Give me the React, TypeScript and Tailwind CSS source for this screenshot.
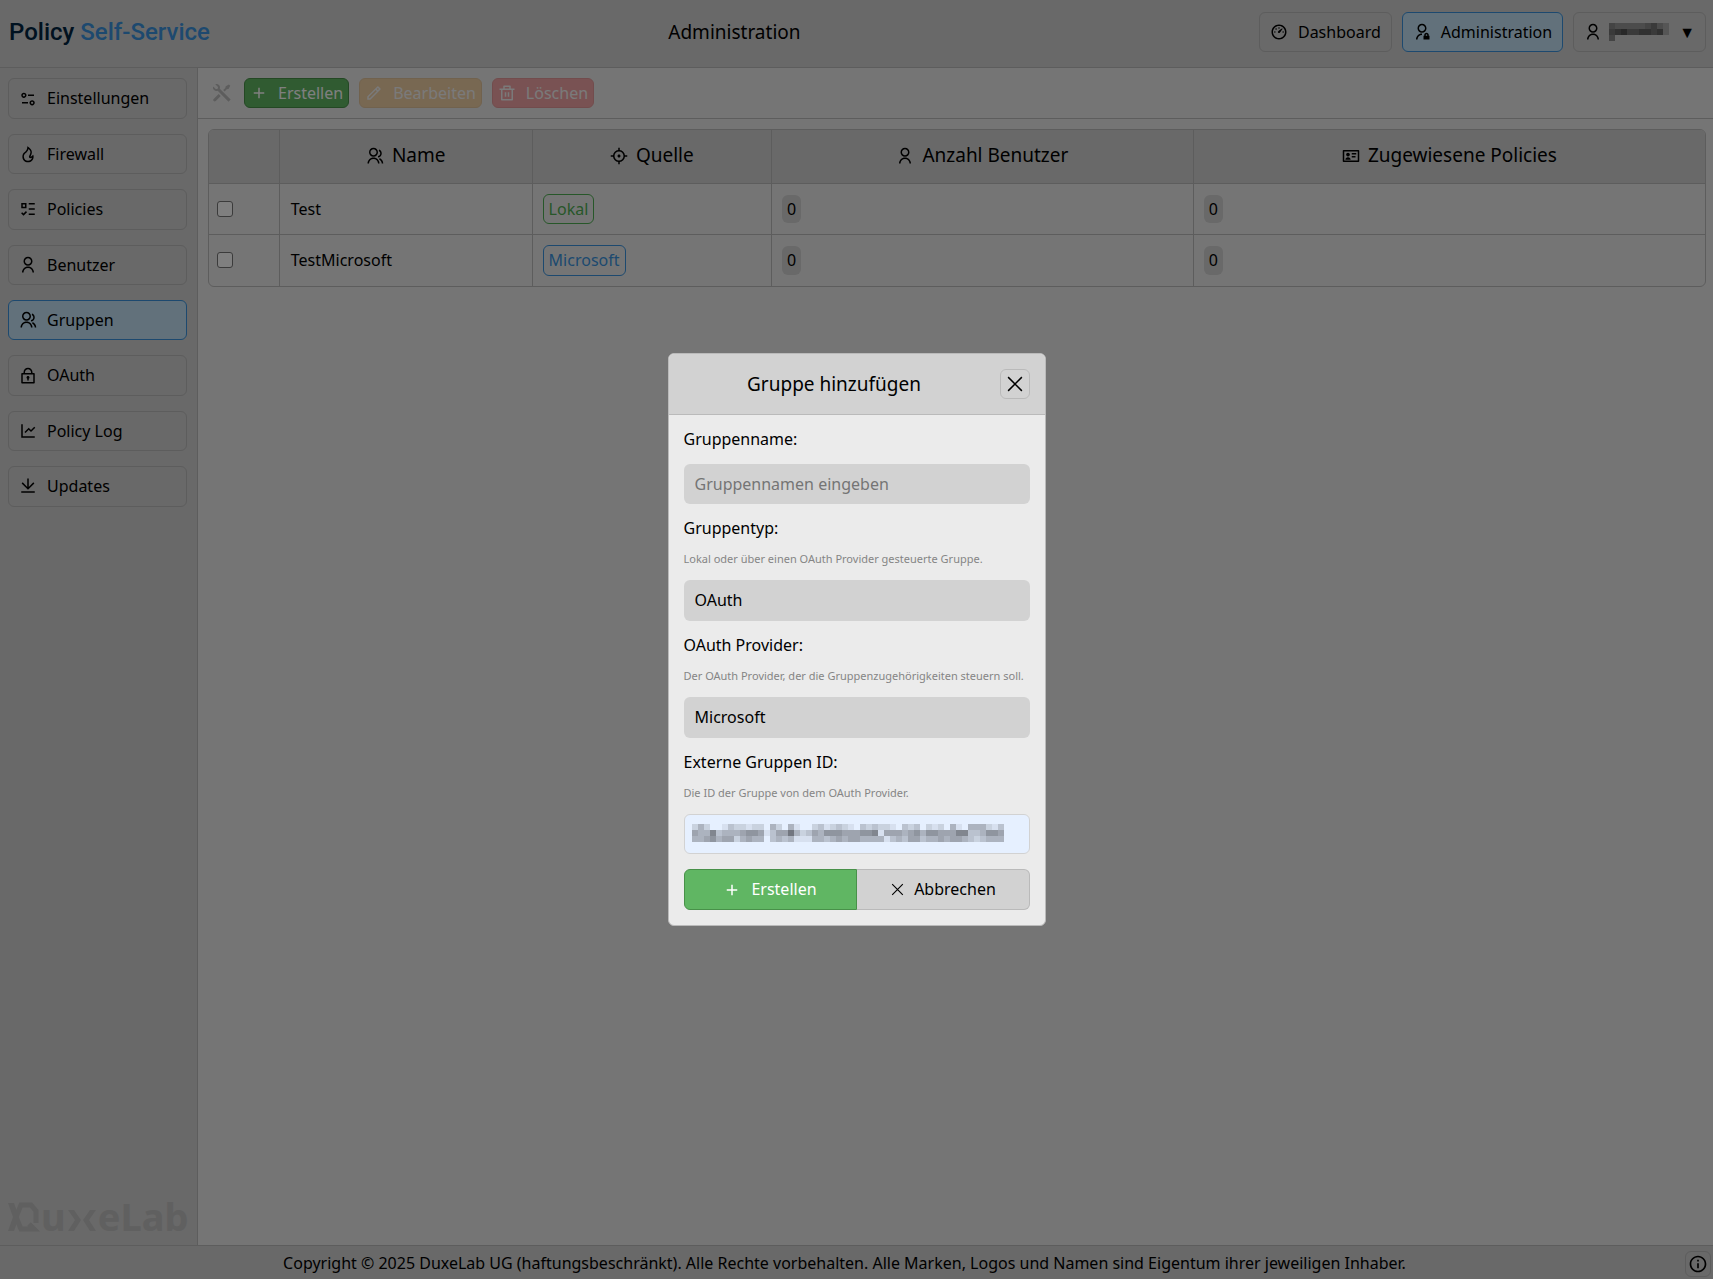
import type { ReactNode } from "react";
import type { IconType } from "react-icons";
import {
  RiAddLine,
  RiAdminLine,
  RiDashboard3Line,
  RiDeleteBinLine,
  RiDownloadLine,
  RiEqualizer2Line,
  RiFireLine,
  RiFocus3Line,
  RiGroupLine,
  RiIdCardLine,
  RiInformationLine,
  RiLineChartLine,
  RiListCheck3,
  RiLock2Line,
  RiPencilLine,
  RiToolsFill,
  RiUserLine,
} from "react-icons/ri";

const navItems = [
  { label: "Einstellungen", icon: RiEqualizer2Line },
  { label: "Firewall", icon: RiFireLine },
  { label: "Policies", icon: RiListCheck3 },
  { label: "Benutzer", icon: RiUserLine },
  { label: "Gruppen", icon: RiGroupLine, active: true },
  { label: "OAuth", icon: RiLock2Line },
  { label: "Policy Log", icon: RiLineChartLine },
  { label: "Updates", icon: RiDownloadLine },
];

const columns = [
  { label: "Name", icon: RiGroupLine },
  { label: "Quelle", icon: RiFocus3Line },
  { label: "Anzahl Benutzer", icon: RiUserLine },
  { label: "Zugewiesene Policies", icon: RiIdCardLine },
];

const groups = [
  {
    name: "Test",
    source: "Lokal",
    sourceClass: "border-[#4fae52] text-[#4fae52]",
    users: 0,
    policies: 0,
  },
  {
    name: "TestMicrosoft",
    source: "Microsoft",
    sourceClass: "border-[#3a93de] text-[#3a93de]",
    users: 0,
    policies: 0,
  },
];

// One digit per block, 0 = clear, 9 = darkest
const maskedUser = ["4333334532", "5675566562", "4000000000"];
const maskedId = [
  "2420013221220420410023123210323221032302120410444213",
  "5447344456651355842354666555667155545646655577334665",
  "4456455245440343411144345455444413435534454554323444",
];

function Mask({ rows, className }: { rows: string[]; className?: string }) {
  const width = rows[0].length * 6;
  const height = rows.length * 6;
  return (
    <svg
      width={width}
      height={height}
      viewBox={`0 0 ${width} ${height}`}
      className={className}
      shapeRendering="crispEdges"
      aria-hidden="true"
    >
      {rows.map((row, y) =>
        row
          .split("")
          .map((level, x) => (
            <rect
              key={`${x}-${y}`}
              x={x * 6}
              y={y * 6}
              width="6"
              height="6"
              fill="currentColor"
              opacity={Number(level) / 10}
            />
          ))
      )}
    </svg>
  );
}

function CrossIcon({ size }: { size: number }) {
  return (
    <svg
      width={size}
      height={size}
      viewBox="0 0 24 24"
      fill="none"
      stroke="currentColor"
      strokeWidth="1.6"
      className="shrink-0"
      aria-hidden="true"
    >
      <path d="M4.5 4.5l15 15M19.5 4.5l-15 15" />
    </svg>
  );
}

function NavLink({
  label,
  icon: Icon,
  active,
}: {
  label: string;
  icon: IconType;
  active?: boolean;
}) {
  return (
    <a
      href="#"
      className={`flex items-center gap-2.5 rounded-md border px-2.5 py-2 ${
        active ? "border-[#3a93de] bg-[#c4e3f6]" : "border-[#bababa]"
      }`}
    >
      <Icon size={18} />
      {label}
    </a>
  );
}

function DuxeLabLogo() {
  return (
    <div
      className="flex h-10 items-end text-[38px] leading-[38px] font-bold text-[#c0c0c0]"
      aria-label="DuxeLab"
    >
      <svg width="33" height="40" viewBox="0 0 33 40" className="shrink-0">
        <path d="M0 8h6l5 14-5 14H0l5-14z" fill="currentColor" />
        <path
          d="M28 28V16l-5-6H13L8 22l5 12h13l-5-5"
          fill="none"
          stroke="currentColor"
          strokeWidth="5"
        />
      </svg>
      u
      <svg width="32" height="40" viewBox="0 0 32 40" className="shrink-0">
        <path
          d="M2 15h6l7 10-7 11H2l7-11zM30 15h-6l-7 10 7 11h6l-7-11z"
          fill="currentColor"
        />
      </svg>
      eLab
    </div>
  );
}

function Field({
  id,
  label,
  hint,
  children,
}: {
  id: string;
  label: string;
  hint?: string;
  children: ReactNode;
}) {
  return (
    <div className="flex flex-col gap-[15px]">
      <label htmlFor={id} className="leading-[19px]">
        {label}
      </label>
      {hint && <p className="text-[11px] leading-3 text-[#858585]">{hint}</p>}
      {children}
    </div>
  );
}

function GroupDialog() {
  return (
    <div className="fixed inset-0 grid place-items-center bg-black/50">
      <div
        role="dialog"
        aria-modal="true"
        aria-labelledby="dialog-title"
        className="w-[378px] overflow-hidden rounded-md border border-[#bababa] bg-[#ebebeb]"
      >
        <div className="flex items-center gap-[15px] border-b border-[#bababa] bg-[#d2d2d2] p-[15px]">
          <h2 id="dialog-title" className="flex-1 text-center text-[19px]">
            Gruppe hinzufügen
          </h2>
          <button
            type="button"
            aria-label="Schließen"
            className="flex size-[30px] items-center justify-center rounded-md border border-[#bababa]"
          >
            <CrossIcon size={22} />
          </button>
        </div>

        <form className="flex flex-col gap-[15px] p-[15px]">
          <Field id="group-name" label="Gruppenname:">
            <input
              id="group-name"
              type="text"
              placeholder="Gruppennamen eingeben"
              className="h-10 w-full rounded-md bg-[#d2d2d2] px-[11px] placeholder:text-[#757575]"
            />
          </Field>
          <Field
            id="group-type"
            label="Gruppentyp:"
            hint="Lokal oder über einen OAuth Provider gesteuerte Gruppe."
          >
            <select
              id="group-type"
              className="h-[41px] w-full appearance-none rounded-md bg-[#d2d2d2] px-[11px]"
            >
              <option>OAuth</option>
              <option>Lokal</option>
            </select>
          </Field>
          <Field
            id="group-provider"
            label="OAuth Provider:"
            hint="Der OAuth Provider, der die Gruppenzugehörigkeiten steuern soll."
          >
            <select
              id="group-provider"
              className="h-[41px] w-full appearance-none rounded-md bg-[#d2d2d2] px-[11px]"
            >
              <option>Microsoft</option>
            </select>
          </Field>
          <Field
            id="group-external"
            label="Externe Gruppen ID:"
            hint="Die ID der Gruppe von dem OAuth Provider."
          >
            <div className="relative">
              <input
                id="group-external"
                type="text"
                className="block h-10 w-full rounded-md border border-[#d2d2d2] bg-[#e6f0ff] px-2.5"
              />
              <Mask
                rows={maskedId}
                className="pointer-events-none absolute top-2.5 left-2 text-[#55585f]"
              />
            </div>
          </Field>
          <div className="grid grid-cols-2">
            <button
              type="button"
              className="flex h-[41px] items-center justify-center gap-2.5 rounded-l-md border border-[#489149] bg-[#60b663] text-white"
            >
              <RiAddLine size={18} />
              Erstellen
            </button>
            <button
              type="button"
              className="flex h-[41px] items-center justify-center gap-2 rounded-r-md border border-l-0 border-[#bababa] bg-[#d2d2d2]"
            >
              <CrossIcon size={17} />
              Abbrechen
            </button>
          </div>
        </form>
      </div>
    </div>
  );
}

export default function App() {
  return (
    <div className="flex min-h-screen flex-col bg-[#ebebeb] font-['Noto_Sans',sans-serif] text-base leading-[1.4] text-black">
      <header className="flex items-start border-b border-[#bababa] bg-[#d2d2d2] px-[7px] pt-3 pb-[15px]">
        <a
          href="#"
          className="pl-0.5 font-[Roboto] text-2xl leading-10 font-medium text-[#3a93de]"
        >
          <span className="text-[#002440]">Policy</span> Self-Service
        </a>
        <h1 className="flex-1 text-center text-[19px] leading-10">Administration</h1>
        <nav className="flex gap-2.5">
          <NavLink label="Dashboard" icon={RiDashboard3Line} />
          <NavLink label="Administration" icon={RiAdminLine} active />
          <button
            type="button"
            aria-label="Benutzermenü"
            className="flex items-center rounded-md border border-[#bababa] px-2.5 py-2"
          >
            <RiUserLine size={18} />
            <Mask rows={maskedUser} className="mr-2.5 ml-[7px] text-[#181818]" />
            <span>▼</span>
          </button>
        </nav>
      </header>

      <div className="flex flex-1">
        <aside className="flex w-[198px] shrink-0 flex-col justify-between border-r border-[#bababa] bg-[#d2d2d2] px-2 py-2.5">
          <nav className="flex flex-col gap-[15px] pr-0.5">
            {navItems.map((item) => (
              <NavLink key={item.label} {...item} />
            ))}
          </nav>
          <DuxeLabLogo />
        </aside>

        <main className="flex-1">
          <div className="flex items-center gap-2.5 border-b border-[#bababa] px-3 py-2.5">
            <RiToolsFill size={24} className="text-[#bababa]" />
            <button
              type="button"
              className="flex h-[30px] items-center gap-2.5 rounded-md border border-[#489149] bg-[#60b663] px-[5px] text-white"
            >
              <RiAddLine size={18} />
              Erstellen
            </button>
            <button
              type="button"
              disabled
              className="flex h-[30px] items-center gap-2.5 rounded-md border border-[#dca050] bg-[#f7b660] px-[5px] text-white opacity-50"
            >
              <RiPencilLine size={18} />
              Bearbeiten
            </button>
            <button
              type="button"
              disabled
              className="flex h-[30px] items-center gap-2.5 rounded-md border border-[#e04a4c] bg-[#f96264] px-[5px] text-white opacity-50"
            >
              <RiDeleteBinLine size={18} />
              Löschen
            </button>
          </div>

          <div className="p-2.5 pr-[7px]">
            <div className="overflow-hidden rounded-md border border-[#bababa]">
              <table className="w-full table-fixed border-collapse">
                <colgroup>
                  <col className="w-[4.7%]" />
                  <col className="w-[16.9%]" />
                  <col className="w-[16%]" />
                  <col className="w-[28.2%]" />
                  <col />
                </colgroup>
                <thead>
                  <tr className="h-[53px] border-b border-[#bababa] bg-[#d2d2d2]">
                    <th aria-label="Auswahl" className="border-r border-[#bababa]" />
                    {columns.map(({ label, icon: Icon }) => (
                      <th
                        key={label}
                        className="border-r border-[#bababa] pb-0.5 text-[19px] font-normal last:border-r-0"
                      >
                        <span className="flex items-center justify-center gap-2">
                          <Icon size={18} />
                          {label}
                        </span>
                      </th>
                    ))}
                  </tr>
                </thead>
                <tbody>
                  {groups.map((group) => (
                    <tr
                      key={group.name}
                      className="border-b border-[#bababa] last:border-b-0"
                    >
                      <td className="border-r border-[#bababa] px-2">
                        <input
                          type="checkbox"
                          aria-label={`${group.name} auswählen`}
                          className="block size-4 appearance-none rounded-[3px] border border-[#767676] bg-white"
                        />
                      </td>
                      <td className="border-r border-[#bababa] px-[11px] py-2.5">{group.name}</td>
                      <td className="border-r border-[#bababa] p-2.5">
                        <span
                          className={`inline-block rounded-md border px-[5px] py-[3px] align-top ${group.sourceClass}`}
                        >
                          {group.source}
                        </span>
                      </td>
                      <td className="border-r border-[#bababa] p-2.5">
                        <span className="inline-block rounded-md bg-[#d2d2d2] px-[5px] py-[3px]">
                          {group.users}
                        </span>
                      </td>
                      <td className="p-2.5">
                        <span className="inline-block rounded-md bg-[#d2d2d2] px-[5px] py-[3px]">
                          {group.policies}
                        </span>
                      </td>
                    </tr>
                  ))}
                </tbody>
              </table>
            </div>
          </div>
        </main>
      </div>

      <footer className="flex h-[34px] items-center border-t border-[#bababa] bg-[#d2d2d2] pt-0.5 pr-0.5 pl-1">
        <p className="flex-1 text-center">
          Copyright © 2025 DuxeLab UG (haftungsbeschränkt). Alle Rechte vorbehalten. Alle Marken,
          Logos und Namen sind Eigentum ihrer jeweiligen Inhaber.
        </p>
        <button
          type="button"
          aria-label="Informationen"
          className="flex size-[26px] items-center justify-center rounded-md border border-[#bababa]"
        >
          <RiInformationLine size={20} className="shrink-0" />
        </button>
      </footer>

      <GroupDialog />
    </div>
  );
}
